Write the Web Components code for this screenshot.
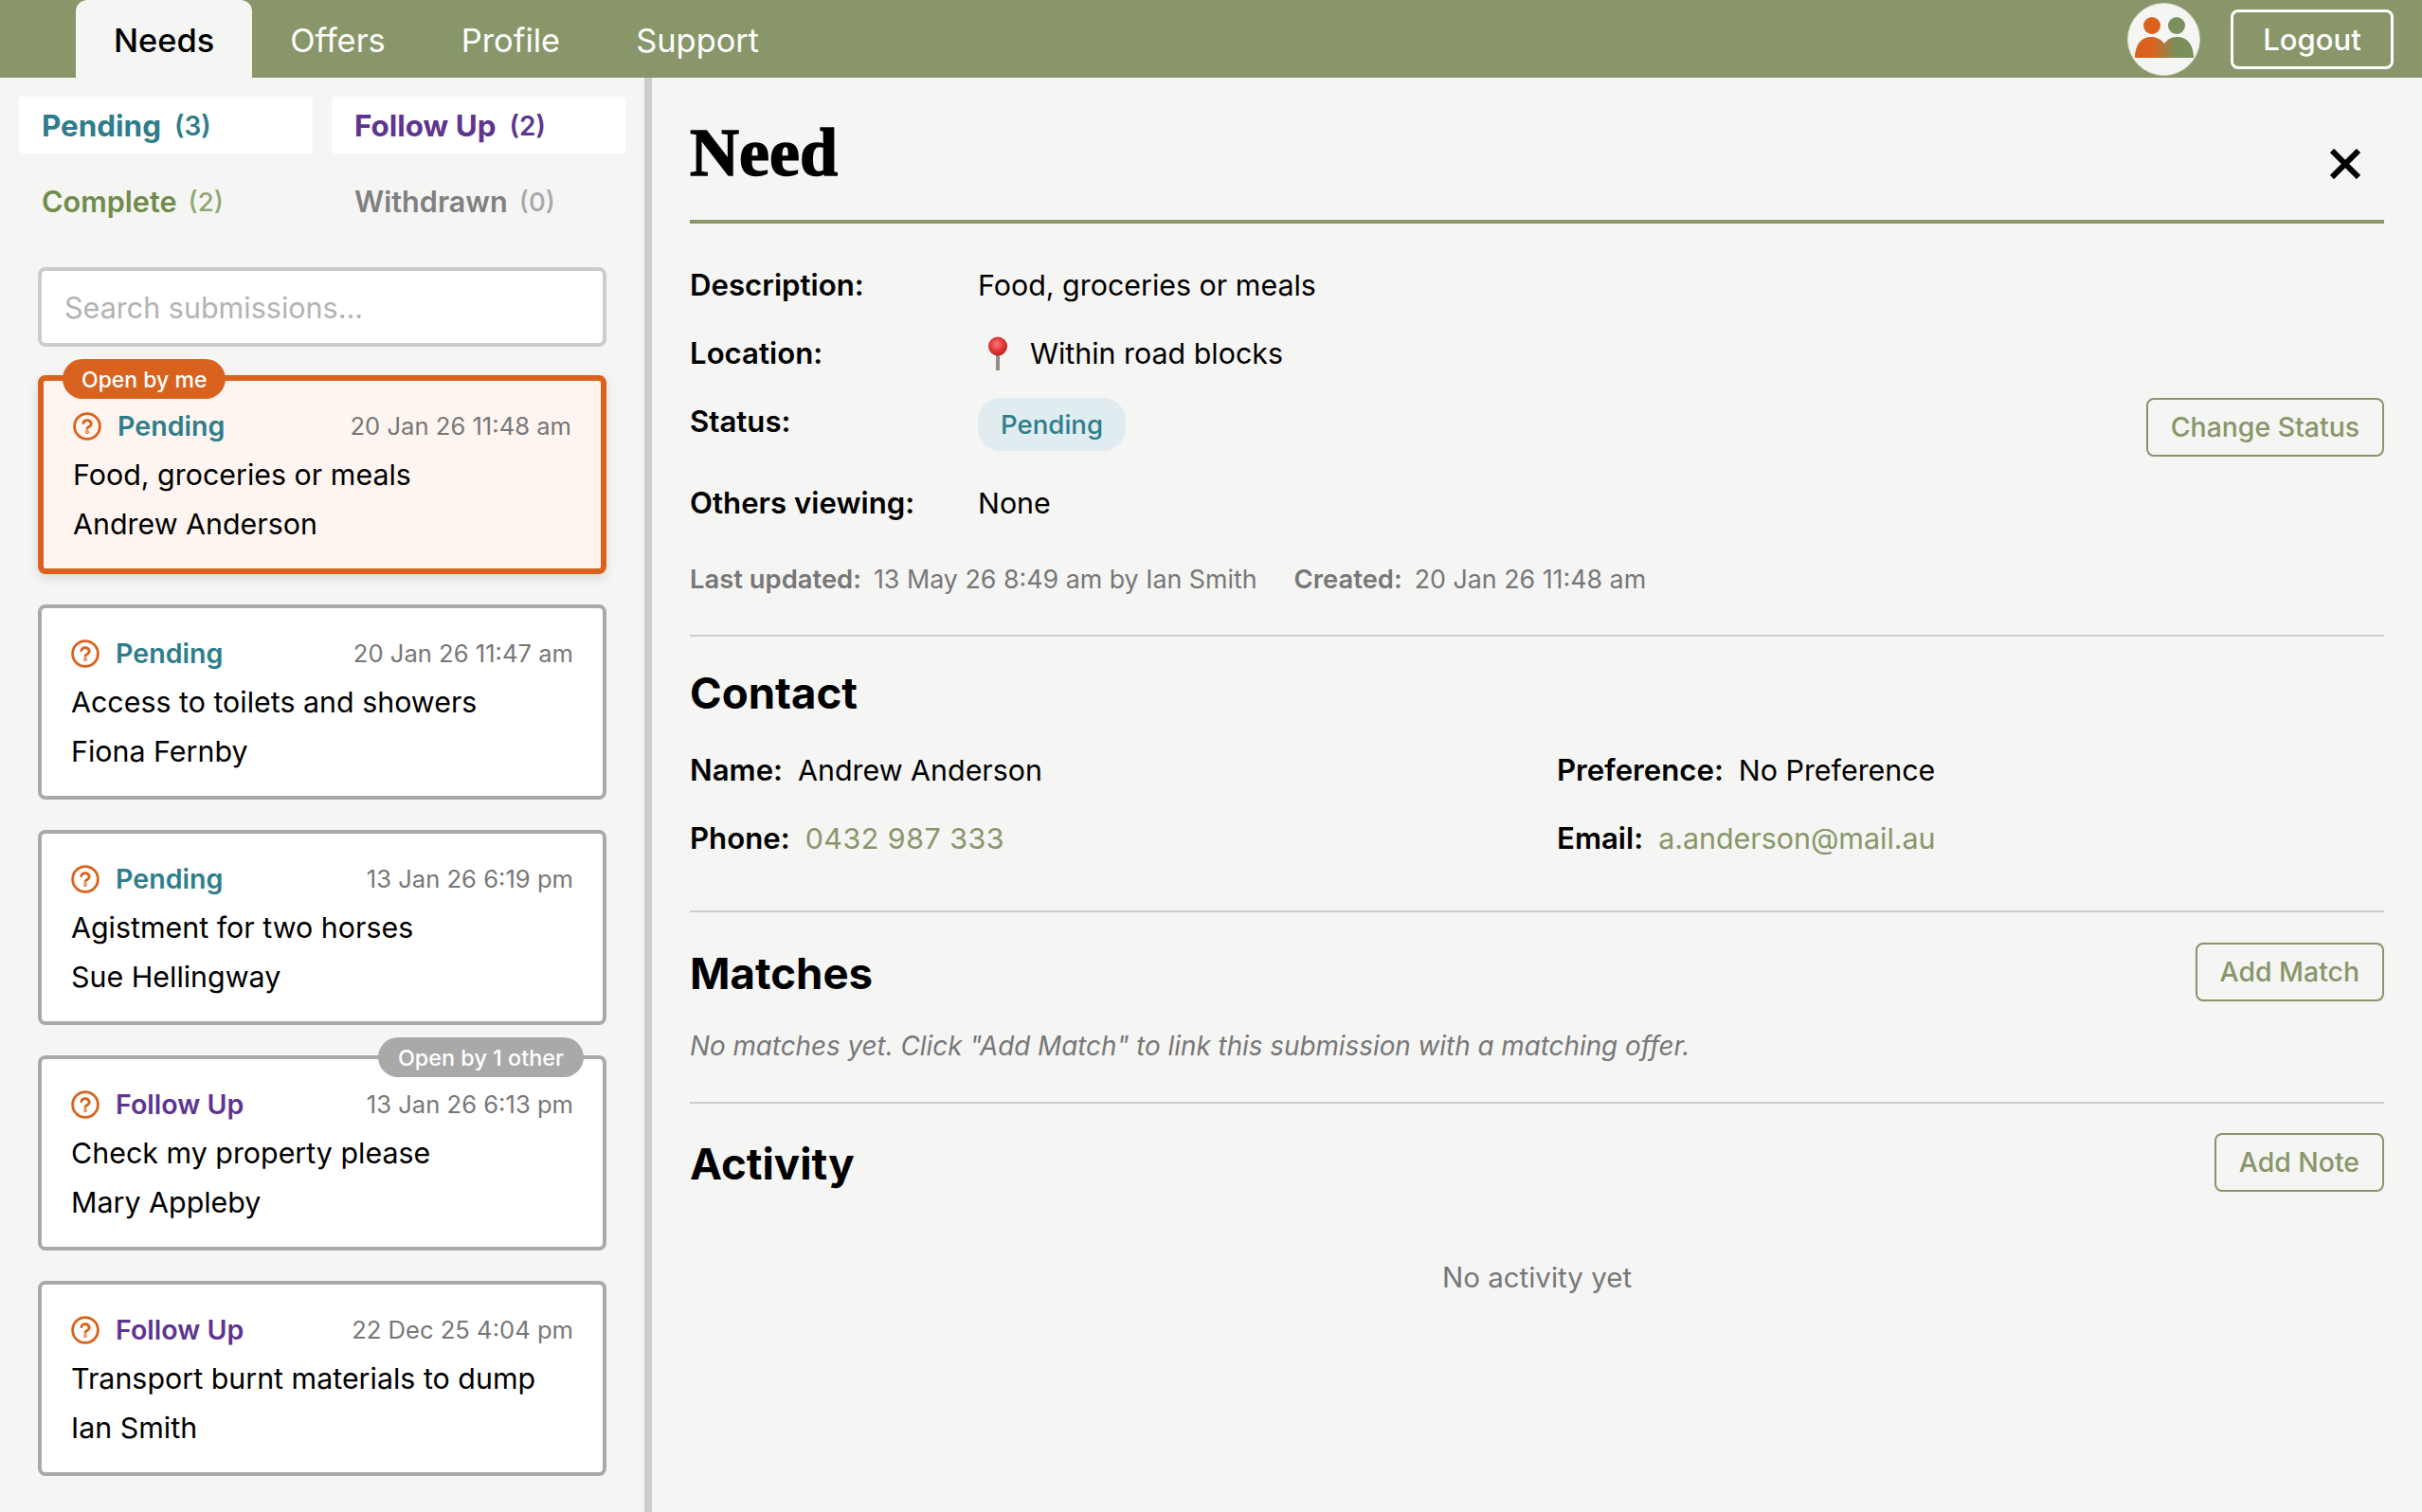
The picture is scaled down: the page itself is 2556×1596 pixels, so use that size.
<!DOCTYPE html>
<html>
<head>
<meta charset="utf-8">
<title>Needs</title>
<style>
  html, body { margin: 0; padding: 0; height: 100%; overflow: hidden; }
  body {
    background: #f5f5f3;
    color: #000;
    font-family: Inter, "Liberation Sans", sans-serif;
    font-size: 30.4px;
  }
  app-shell { height: 100vh; }
</style>
</head>
<body>
<app-shell>
  <top-nav slot="nav"></top-nav>
  <side-list slot="side"></side-list>
  <need-detail slot="main"></need-detail>
</app-shell>

<script>
const ICON_QUESTION = `<svg viewBox="0 0 30 30" width="30" height="30" fill="none" stroke="#d9631e" stroke-width="2.8" stroke-linecap="round">
  <circle cx="15" cy="15" r="13.4"/>
  <path d="M10.8 11.6a4.3 4.3 0 0 1 8.4 1.2c0 2.4-4 2.9-4.2 4.6"/>
  <circle cx="15" cy="21" r="0.5" fill="#d9631e"/>
</svg>`;

class AppShell extends HTMLElement {
  constructor() {
    super();
    this.attachShadow({ mode: 'open' });
    this.shadowRoot.innerHTML = `
      <style>
        :host { display: flex; flex-direction: column; }
        .body { display: flex; flex: 1; min-height: 0; }
        .side { width: 680px; flex: none; overflow: hidden; }
        .main { flex: 1; min-width: 0; border-left: 8px solid #cccccc; }
      </style>
      <slot name="nav"></slot>
      <div class="body">
        <div class="side"><slot name="side"></slot></div>
        <div class="main"><slot name="main"></slot></div>
      </div>
    `;
  }
}

class TopNav extends HTMLElement {
  constructor() {
    super();
    this.attachShadow({ mode: 'open' });
    this.shadowRoot.innerHTML = `
      <style>
        :host {
          display: flex;
          align-items: stretch;
          height: 82px;
          background: #88966a;
          padding: 0 30px 0 80px;
          color: #fff;
          font-size: 34.4px;
        }
        a { display: flex; align-items: center; padding: 2px 40px 0; }
        a.on {
          background: #f5f5f3;
          color: #000;
          font-weight: 500;
          border-radius: 12px 12px 0 0;
        }
        .right { margin-left: auto; display: flex; align-items: center; gap: 32px; }
        .avatar {
          width: 77px; height: 77px; border-radius: 50%;
          background: #f5f5f3;
          box-sizing: border-box;
          border: 1px solid #d8dccb;
          display: flex; align-items: center; justify-content: center;
        }
        .logout {
          height: 63px; box-sizing: border-box;
          width: 172px;
          border: 3px solid #fff;
          border-radius: 8px;
          display: flex; align-items: center; justify-content: center;
          font-size: 31px; font-weight: 500;
        }
      </style>
      <a class="on">Needs</a>
      <a>Offers</a>
      <a>Profile</a>
      <a>Support</a>
      <div class="right">
        <div class="avatar">
          <svg width="64" height="48" viewBox="0 0 64 48">
            <defs>
              <linearGradient id="ppl" x1="0" x2="1" y1="0" y2="0">
                <stop offset="0.3" stop-color="#d9631e"/>
                <stop offset="0.7" stop-color="#7a8f5c"/>
              </linearGradient>
            </defs>
            <circle cx="19" cy="10" r="9" fill="#d9631e"/>
            <circle cx="45" cy="10" r="9" fill="#7a8f5c"/>
            <path d="M1 44C1 30 8 22 18 22c6 0 10 2 14 7 4-5 8-7 14-7 10 0 17 8 17 22z" fill="url(#ppl)"/>
          </svg>
        </div>
        <div class="logout">Logout</div>
      </div>
    `;
  }
}

class FilterTabs extends HTMLElement {
  constructor() {
    super();
    this.attachShadow({ mode: 'open' });
    this.shadowRoot.innerHTML = `
      <style>
        :host {
          display: grid;
          grid-template-columns: 310px 310px;
          grid-auto-rows: 60px;
          gap: 20px;
          font-size: 30.6px;
          font-weight: 600;
        }
        div { display: flex; align-items: center; gap: 12px; padding: 1px 0 0 24px; border-radius: 4px; }
        .on { background: #fff; font-size: 31.4px; font-weight: 700; gap: 14px; }
        span { font-size: 27.6px; font-weight: 500; }
        .on span { font-size: 28px; font-weight: 600; }
        .pending { color: #2e7d8c; }
        .followup { color: #5e3490; }
        .complete { color: #6f8c4a; }
        .complete span { color: #8fa874; }
        .withdrawn { color: #808080; }
        .withdrawn span { color: #a8a8a8; }
      </style>
      <div class="pending on">Pending <span>(3)</span></div>
      <div class="followup on">Follow Up <span>(2)</span></div>
      <div class="complete">Complete <span>(2)</span></div>
      <div class="withdrawn">Withdrawn <span>(0)</span></div>
    `;
  }
}

class SearchBox extends HTMLElement {
  constructor() {
    super();
    this.attachShadow({ mode: 'open' });
    this.shadowRoot.innerHTML = `
      <style>
        :host {
          display: flex;
          align-items: center;
          box-sizing: border-box;
          height: 84px;
          background: #fff;
          border: 4px solid #cccccc;
          border-radius: 8px;
          padding: 0 24px;
          color: #b3b3b3;
          font-size: 30.5px;
        }
      </style>
      Search submissions...
    `;
  }
}

class SubCard extends HTMLElement {
  connectedCallback() {
    if (this.shadowRoot) return;
    this.attachShadow({ mode: 'open' });
    const status = this.getAttribute('status');
    const color = status === 'Pending' ? '#2e7d8c' : '#5e3490';
    const badge = this.getAttribute('badge');
    const selected = this.hasAttribute('selected');
    this.shadowRoot.innerHTML = `
      <style>
        :host {
          display: block;
          position: relative;
          box-sizing: border-box;
          background: #fff;
          border: 4px solid #a9a9a9;
          border-radius: 8px;
          padding: 22px 31px 21px;
          line-height: 52px;
          font-size: 30.4px;
        }
        :host([selected]) {
          border: 6px solid #d9631e;
          background: #fef5f0;
          box-shadow: 0 4px 12px rgba(0,0,0,0.12);
        }
        .badge {
          position: absolute; top: -23px; ${selected ? 'left: 20px;' : 'right: 20px;'}
          height: 42px; padding: 0 ${selected ? 20 : 21}px;
          border-radius: 21px;
          background: ${selected ? '#d9631e' : '#a9a9a9'};
          color: #fff;
          font-size: ${selected ? 23 : 23.4}px; font-weight: 500; line-height: 44px;
          white-space: nowrap;
        }
        .row { display: flex; align-items: center; margin-bottom: -1px; }
        svg { flex: none; margin-right: 17px; }
        .status { font-size: 28.6px; font-weight: 600; color: ${color}; }
        .date { margin-left: auto; font-size: 25.6px; color: #777; }
      </style>
      ${badge ? `<div class="badge">${badge}</div>` : ''}
      <div class="row">${ICON_QUESTION}<span class="status">${status}</span><span class="date">${this.getAttribute('date')}</span></div>
      <div>${this.getAttribute('need')}</div>
      <div>${this.getAttribute('who')}</div>
    `;
  }
}

class SideList extends HTMLElement {
  constructor() {
    super();
    this.attachShadow({ mode: 'open' });
    this.shadowRoot.innerHTML = `
      <style>
        :host { display: block; padding-top: 20px; }
        filter-tabs { margin-left: 20px; }
        .list { padding: 40px 40px 0; display: flex; flex-direction: column; }
        sub-card { margin-bottom: 32px; }
        search-box { margin-bottom: 30px; }
      </style>
      <filter-tabs></filter-tabs>
      <div class="list">
        <search-box></search-box>
        <sub-card selected badge="Open by me" status="Pending" date="20 Jan 26 11:48 am" need="Food, groceries or meals" who="Andrew Anderson"></sub-card>
        <sub-card status="Pending" date="20 Jan 26 11:47 am" need="Access to toilets and showers" who="Fiona Fernby"></sub-card>
        <sub-card status="Pending" date="13 Jan 26 6:19 pm" need="Agistment for two horses" who="Sue Hellingway"></sub-card>
        <sub-card badge="Open by 1 other" status="Follow Up" date="13 Jan 26 6:13 pm" need="Check my property please" who="Mary Appleby"></sub-card>
        <sub-card status="Follow Up" date="22 Dec 25 4:04 pm" need="Transport burnt materials to dump" who="Ian Smith"></sub-card>
      </div>
    `;
  }
}

class OutlineBtn extends HTMLElement {
  constructor() {
    super();
    this.attachShadow({ mode: 'open' });
    this.shadowRoot.innerHTML = `
      <style>
        :host {
          display: inline-flex; align-items: center; justify-content: center;
          box-sizing: border-box;
          height: 62px;
          padding: 0 24px;
          border: 2px solid #88966a;
          border-radius: 8px;
          color: #88966a;
          font-size: 28.4px;
          font-weight: 500;
          white-space: nowrap;
        }
      </style>
      <slot></slot>
    `;
  }
}

class NeedDetail extends HTMLElement {
  constructor() {
    super();
    this.attachShadow({ mode: 'open' });
    this.shadowRoot.innerHTML = `
      <style>
        :host { display: block; padding: 0 40px; line-height: 1.2; }
        header {
          display: flex; align-items: flex-start; justify-content: space-between;
          height: 154px; box-sizing: border-box;
          border-bottom: 4px solid #88966a;
        }
        h1 {
          margin: 43px 0 0; font: bold 72px/1 "Liberation Serif", serif;
          -webkit-text-stroke: 1.5px #000;
        }
        .close { margin: 75px 25px 0 0; width: 32px; height: 32px; display: block; }
        .row { display: grid; grid-template-columns: 304px 1fr auto; align-items: center; height: 72px; }
        .row.tall { height: 86px; align-items: start; line-height: 72px; }
        .row.tall .pill, .row.tall outline-btn { margin-top: 11px; }
        .row.tall .pill { line-height: 56px; }
        .row:not(.tall) b { padding-top: 2px; }
        b { font-weight: 600; font-size: 31.2px; }
        .facts { padding-top: 29px; }
        .pin { display: inline-flex; align-items: center; gap: 24px; margin-left: 11px; }
        .pill {
          display: inline-block; height: 56px;
          padding: 0 24px; border-radius: 24px;
          background: #e0ecef; color: #2e7d8c;
          font-size: 27.6px; font-weight: 500;
        }
        .meta { margin-top: 15px; font-size: 26.8px; color: #777; display: flex; gap: 39px; height: 58px; align-items: center; }
        .meta b { margin-right: 13px; font-size: 27.4px; }
        hr { border: 0; border-top: 2px solid #cccccc; margin: 0; }
        h2 { margin: 0; font-size: 45.6px; font-weight: 700; }
        .sec-head { display: flex; align-items: center; justify-content: space-between; }
        .sec-head h2 { margin-top: 5px; }
        .contact { display: grid; grid-template-columns: 915px 1fr; }
        .contact div { height: 72px; display: flex; align-items: center; gap: 16px; }
        .link { color: #88966a; }
        .phone { letter-spacing: 0.5px; }
        .empty { color: #777; font-size: 27.8px; font-style: italic; }
        .none { color: #777; font-size: 29.5px; text-align: center; }
      </style>
      <header>
        <h1>Need</h1>
        <svg class="close" viewBox="0 0 32 32" stroke="#000" stroke-width="6"><path d="M2 2L30 30M30 2L2 30"/></svg>
      </header>
      <div class="facts">
        <div class="row"><b>Description:</b><span>Food, groceries or meals</span></div>
        <div class="row"><b>Location:</b><span class="pin">
          <svg width="20" height="36" viewBox="0 0 20 36">
            <defs><radialGradient id="pg" cx="0.45" cy="0.4" r="0.62"><stop offset="0" stop-color="#f47c7c"/><stop offset="0.55" stop-color="#e23a3a"/><stop offset="1" stop-color="#b81f1f"/></radialGradient></defs>
            <rect x="8" y="17" width="4" height="19" fill="#948c85"/>
            <circle cx="10" cy="10.5" r="10" fill="url(#pg)"/>
          </svg>Within road blocks</span></div>
        <div class="row tall"><b>Status:</b><span><span class="pill">Pending</span></span><outline-btn>Change Status</outline-btn></div>
        <div class="row"><b>Others viewing:</b><span>None</span></div>
      </div>
      <div class="meta"><span><b>Last updated:</b>13 May 26 8:49 am by Ian Smith</span><span><b>Created:</b>20 Jan 26 11:48 am</span></div>
      <hr style="margin-top:30px">
      <h2 style="margin-top:33px">Contact</h2>
      <div class="contact" style="margin-top:18px">
        <div><b>Name:</b> Andrew Anderson</div>
        <div><b>Preference:</b> No Preference</div>
        <div><b>Phone:</b> <span class="link phone">0432 987 333</span></div>
        <div><b>Email:</b> <span class="link">a.anderson@mail.au</span></div>
      </div>
      <hr style="margin-top:39px">
      <div class="sec-head" style="margin-top:32px"><h2>Matches</h2><outline-btn>Add Match</outline-btn></div>
      <div class="empty" style="margin-top:31px">No matches yet. Click "Add Match" to link this submission with a matching offer.</div>
      <hr style="margin-top:42px">
      <div class="sec-head" style="margin-top:31px"><h2>Activity</h2><outline-btn>Add Note</outline-btn></div>
      <div class="none" style="margin-top:73px">No activity yet</div>
    `;
  }
}

customElements.define('app-shell', AppShell);
customElements.define('top-nav', TopNav);
customElements.define('filter-tabs', FilterTabs);
customElements.define('search-box', SearchBox);
customElements.define('sub-card', SubCard);
customElements.define('side-list', SideList);
customElements.define('outline-btn', OutlineBtn);
customElements.define('need-detail', NeedDetail);
</script>
</body>
</html>
